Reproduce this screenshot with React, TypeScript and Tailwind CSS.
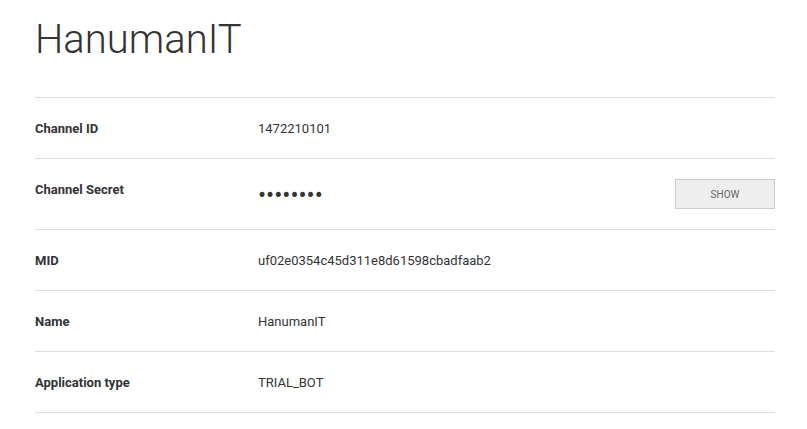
import React from "react";

const ROWS = [
  { label: "Channel ID", value: "1472210101" },
  { label: "Channel Secret", value: "secret" },
  { label: "MID", value: "uf02e0354c45d311e8d61598cbadfaab2" },
  { label: "Name", value: "HanumanIT" },
  { label: "Application type", value: "TRIAL_BOT" },
];

export default function App() {
  return (
    <div
      className="min-h-screen bg-white px-[35px] pt-[16px] text-[#333]"
      style={{ fontFamily: "Roboto, 'Liberation Sans', sans-serif" }}
    >
      <h1 className="text-[40px] font-light leading-[48px] text-[#333]">HanumanIT</h1>
      <div className="mt-[33px] w-[740px] border-t border-[#ddd]">
        {ROWS.map((row) =>
          row.value === "secret" ? (
            <div key={row.label} className="flex items-start border-b border-[#ddd] py-[20px]">
              <div className="w-[223px] shrink-0 pt-[1px] text-[13px] font-bold leading-[20px]">
                {row.label}
              </div>
              <div className="flex flex-1 items-center justify-between">
                <span className="pt-[3px] text-[24px] leading-[27px] text-[#333]">
                  ••••••••
                </span>
                <button className="h-[30px] w-[100px] border border-[#ccc] bg-[#eee] text-[10px] text-[#666]">
                  SHOW
                </button>
              </div>
            </div>
          ) : (
            <div
              key={row.label}
              className="flex items-start border-b border-[#ddd] pt-[21px] pb-[19px]"
            >
              <div className="w-[223px] shrink-0 text-[13px] font-bold leading-[20px]">
                {row.label}
              </div>
              <div className="text-[13px] leading-[20px]">{row.value}</div>
            </div>
          )
        )}
      </div>
    </div>
  );
}
